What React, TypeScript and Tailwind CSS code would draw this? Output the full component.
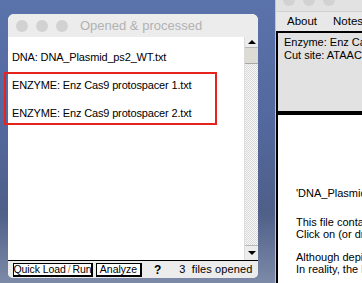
import React from 'react'

const font = { fontFamily: '"Liberation Sans", Arial, sans-serif' }

function Lights({ className = '' }: { className?: string }) {
  return (
    <div className={`flex gap-[8px] ${className}`}>
      <span className="w-[12px] h-[12px] rounded-full bg-[#d2d2d2]" />
      <span className="w-[12px] h-[12px] rounded-full bg-[#d2d2d2]" />
      <span className="w-[12px] h-[12px] rounded-full bg-[#d2d2d2]" />
    </div>
  )
}

function Scrollbar() {
  return (
    <div className="w-[14px] flex flex-col bg-[#f4f4f4] border-l border-[#dcdcdc]">
      <div className="h-[11px] flex items-center justify-center bg-[#ececec] border-b border-[#b8b8b8]">
        <div className="w-0 h-0 border-l-[4px] border-r-[4px] border-b-[4px] border-l-transparent border-r-transparent border-b-black" />
      </div>
      <div className="h-[16px] bg-[#dcdcd4] border-b border-[#a8a8a8]" />
      <div className="flex-1 bg-[repeating-conic-gradient(#d6d6d6_0_25%,#fafafa_0_50%)] bg-[length:2px_2px]" />
      <div className="h-[15px] flex items-center justify-center bg-[#ececec] border-t border-[#b8b8b8]">
        <div className="w-0 h-0 border-l-[4px] border-r-[4px] border-t-[4px] border-l-transparent border-r-transparent border-t-black" />
      </div>
    </div>
  )
}

export default function App() {
  const files = [
    'DNA: DNA_Plasmid_ps2_WT.txt',
    'ENZYME: Enz Cas9 protospacer 1.txt',
    'ENZYME: Enz Cas9 protospacer 2.txt',
  ]

  return (
    <div
      className="relative w-[362px] h-[283px] overflow-hidden bg-[linear-gradient(180deg,#5a73aa_0%,#5369a0_40%,#4e5f88_75%,#7d8aa8_100%)]"
      style={font}
    >
      {/* left window */}
      <div className="absolute left-[8px] top-[14px] w-[250px] h-[264px] flex flex-col rounded-t-[6px] rounded-b-[5px] overflow-hidden bg-[#ececec]">
        <div className="h-[23px] flex items-center px-[8px] gap-[10px] bg-[#ececec]">
          <Lights />
          <span className="text-[13px] text-[#b2b2b2] leading-none pl-[2px]">Opened &amp; processed</span>
        </div>
        <div className="flex-1 flex bg-white">
          <div className="flex-1 pt-[6px] pl-[4px]">
            {files.map(f => (
              <div key={f} className="h-[28px] flex items-center text-[11px] text-black tracking-[-0.15px]">
                {f}
              </div>
            ))}
          </div>
          <Scrollbar />
        </div>
        <div className="h-px bg-black" />
        <div className="h-[17px] flex items-center pl-[5px] text-black bg-[#ececec] whitespace-nowrap">
          <div className="w-[80px] h-[14px] flex items-center justify-center bg-white border border-black border-r-2 border-b-2 leading-none text-[10.5px] tracking-[-0.1px]">
            Quick Load <span className="text-[#c07a3a] px-[2px]">/</span> Run
          </div>
          <div className="ml-[3px] w-[46px] h-[14px] flex items-center justify-center bg-white border border-black border-r-2 border-b-2 leading-none text-[10.5px]">
            Analyze
          </div>
          <span className="ml-[12px] font-bold text-[12px]">?</span>
          <span className="ml-[18px] text-[11px] tracking-[0.1px]">3&nbsp; files opened</span>
        </div>
      </div>

      {/* right window */}
      <div className="absolute left-[275px] top-[-11px] w-[100px] h-[300px] flex flex-col bg-[#e6e6e6] border-l border-[#c4c4c4]">
        <div className="h-[23px] flex items-center pl-[7px] bg-[#e2e2e2] border-b border-[#d0d0d0]">
          <Lights />
        </div>
        <div className="h-[19px] flex items-center gap-[16px] pl-[11px] text-[11.5px] text-black bg-[#e8e8e8]">
          <span>About</span>
          <span>Notes</span>
        </div>
        <div className="flex-1 flex flex-col border-l-2 border-black">
          <div className="h-[81px] border-t-2 border-black bg-[#e2e2e2] pl-[6px] pt-[3px] text-[11px] leading-[13px] text-black whitespace-nowrap border-b border-[#f4f4f4]">
            <div>Enzyme: Enz Cas9 protospacer 2</div>
            <div>Cut site: ATAACTTCGTATAG</div>
          </div>
          <div className="h-[3px] bg-black" />
          <div className="flex-1 bg-white pl-[18px] pt-[72px] text-[11px] leading-[12px] text-black whitespace-nowrap">
            <div>'DNA_Plasmid_ps2_WT.txt'</div>
            <div className="mt-[17px]">This file contains the sequence</div>
            <div>Click on (or drag across) a site</div>
            <div className="mt-[11px]">Although depicted as a line,</div>
            <div>In reality, the large plasmid</div>
          </div>
        </div>
      </div>

      {/* highlight */}
      <div className="absolute left-[4px] top-[72px] w-[213px] h-[53px] border-2 border-[#e6231d]" />
    </div>
  )
}
